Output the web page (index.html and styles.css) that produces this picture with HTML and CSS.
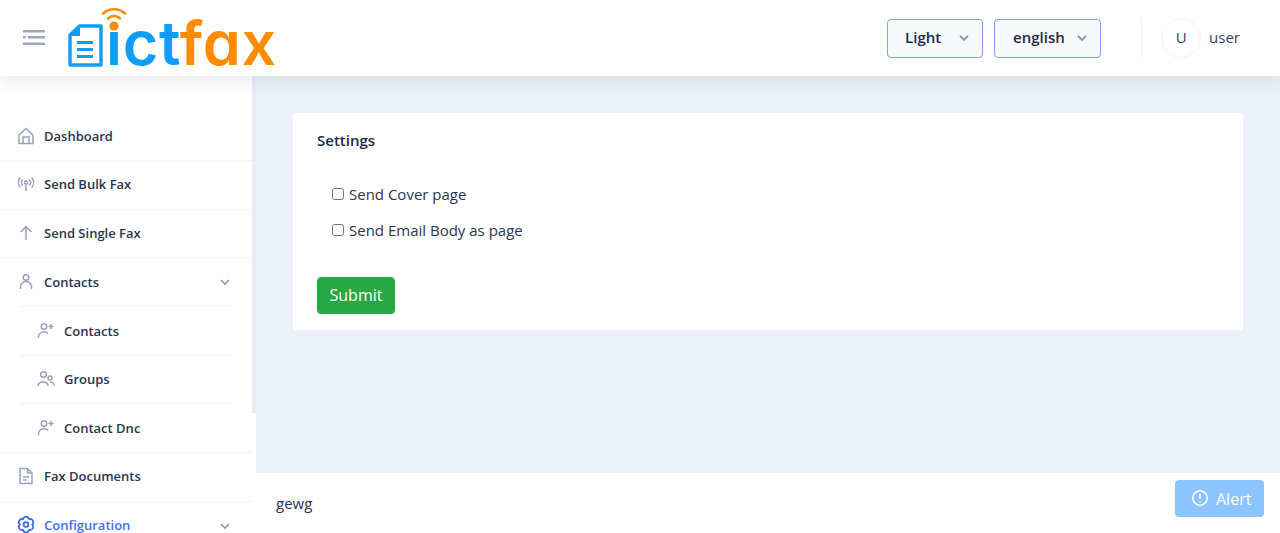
FILE: index.html
```html
<!DOCTYPE html>
<html lang="en">
<head>
<meta charset="utf-8">
<title>Settings</title>
<link rel="stylesheet" href="styles.css">
</head>
<body>
<header class="topbar">
  <button class="burger" aria-label="Menu">
    <svg width="22" height="15" viewBox="0 0 22 15" fill="#9ba5bd"><rect x="0" y="0" width="22" height="2.500"/><rect x="0" y="6" width="2.500" height="2.500"/><rect x="5" y="6" width="17" height="2.500"/><rect x="0" y="12.500" width="22" height="2.500"/></svg>
  </button>
  <div class="logo">
    <svg class="logo-doc" width="35" height="43" viewBox="0 0 35 43" fill="none">
      <path d="M11.500 2H33V41H2V11z" stroke="#0f9df8" stroke-width="3.400" stroke-linejoin="round"/>
      <path d="M12 3v9H3z" fill="#0f9df8"/>
      <path d="M9 18.500h16M9 25.500h16M9 32.500h16" stroke="#0f9df8" stroke-width="3.200"/>
    </svg>
    <span class="logo-word"><span class="blue">ıct</span><span class="orange">fax</span></span>
    <svg class="logo-wifi" width="26" height="28" viewBox="0 0 26 28" fill="none" stroke="#ff8c00" stroke-width="2.600" stroke-linecap="round">
      <path d="M2 6.500C8 .8 18 .8 24 6.500"/>
      <path d="M7 11.500c4-3.400 8-3.400 12 0"/>
      <circle cx="13" cy="19" r="4.600" fill="#ff8c00" stroke="none"/>
    </svg>
  </div>
  <div class="top-right">
    <button class="select select-theme"><span>Light</span><svg class="chev" width="12" height="8" viewBox="0 0 12 8" fill="none" stroke="#8d95a8" stroke-width="1.800"><path d="M2 2l4 4 4-4"/></svg></button>
    <button class="select select-lang"><span>english</span><svg class="chev" width="12" height="8" viewBox="0 0 12 8" fill="none" stroke="#8d95a8" stroke-width="1.800"><path d="M2 2l4 4 4-4"/></svg></button>
    <div class="user">
      <span class="avatar">U</span>
      <span class="username">user</span>
    </div>
  </div>
</header>

<div class="body-row">
  <aside class="sidebar">
    <nav class="nav">
      <a class="item"><svg class="ico" viewBox="0 0 18 18"><path d="M2 16.500V8l7-6.500L16 8v8.500zM6 16.500V10h6v6.500"/></svg>Dashboard</a>
      <a class="item"><svg class="ico" viewBox="0 0 18 18"><circle cx="9" cy="7.500" r="1.600"/><path d="M9 9v7M5.800 4.500a4.500 4.500 0 0 0 0 6.200M12.200 4.500a4.500 4.500 0 0 1 0 6.200M3.200 2.500a8 8 0 0 0 0 10M14.800 2.500a8 8 0 0 1 0 10"/></svg>Send Bulk Fax</a>
      <a class="item"><svg class="ico" viewBox="0 0 18 18"><path d="M9 16V2.500M3.500 8L9 2.500 14.500 8"/></svg>Send Single Fax</a>
      <a class="item parent"><svg class="ico" viewBox="0 0 18 18"><circle cx="9" cy="4.500" r="2.800"/><path d="M3.500 16v-2a5.500 5.500 0 0 1 11 0v2"/></svg>Contacts<svg class="chev-side" width="12" height="8" viewBox="0 0 12 8" fill="none" stroke="#8d95a8" stroke-width="1.600"><path d="M2 2l4 4 4-4"/></svg></a>
      <div class="sub">
        <a class="item subitem"><svg class="ico" viewBox="0 0 18 18"><circle cx="7" cy="4.500" r="2.800"/><path d="M1.500 16v-1a5.500 5.500 0 0 1 9.500-3.500M14 2v5M11.500 4.500h5"/></svg>Contacts</a>
        <a class="item subitem"><svg class="ico" viewBox="0 0 18 18"><circle cx="6.500" cy="4.500" r="2.800"/><circle cx="13" cy="8" r="2"/><path d="M1 16v-1a5.500 5.500 0 0 1 10 0v1M13 12a3.500 3.500 0 0 1 4 3.500"/></svg>Groups</a>
        <a class="item subitem last"><svg class="ico" viewBox="0 0 18 18"><circle cx="7" cy="4.500" r="2.800"/><path d="M1.500 16v-1a5.500 5.500 0 0 1 9.500-3.500M14 2v5M11.500 4.500h5"/></svg>Contact Dnc</a>
      </div>
      <a class="item docs"><svg class="ico" viewBox="0 0 18 18"><path d="M3 1.500h7.500L15 6v10.500H3zM10.500 1.500V6H15M6 10h6M6 13h3.500"/></svg>Fax Documents</a>
      <a class="item active"><svg class="ico" viewBox="0 0 18 18"><path d="M12.100 3.130A3.200 3.200 0 0 1 15.200 8.500 3.200 3.200 0 0 1 12.100 13.870 3.200 3.200 0 0 1 5.900 13.870 3.200 3.200 0 0 1 2.800 8.500 3.200 3.200 0 0 1 5.900 3.130 3.200 3.200 0 0 1 12.100 3.130z"/><circle cx="9" cy="8.500" r="2.400"/></svg>Configuration<svg class="chev-side" width="12" height="8" viewBox="0 0 12 8" fill="none" stroke="#8d95a8" stroke-width="1.600"><path d="M2 2l4 4 4-4"/></svg></a>
    </nav>
  </aside>

  <div class="content">
    <main class="main">
      <section class="card">
        <h2 class="card-title">Settings</h2>
        <label class="check"><input type="checkbox"><span>Send Cover page</span></label>
        <label class="check"><input type="checkbox"><span>Send Email Body as page</span></label>
        <button class="submit">Submit</button>
      </section>
    </main>
    <footer class="footer">
      <span class="foot-text">gewg</span>
      <button class="alert"><svg width="18" height="18" viewBox="0 0 18 18" fill="none" stroke="#fff" stroke-width="1.500"><circle cx="9" cy="9" r="7.200"/><path d="M9 4.800v5M9 12v1.300"/></svg>Alert</button>
    </footer>
  </div>
</div>
</body>
</html>
```

FILE: styles.css
```css
* { box-sizing: border-box; }
html, body { margin: 0; height: 100%; overflow: hidden; }
body {
  font-family: "Open Sans", "Noto Sans", sans-serif;
  color: #212b45;
  background: #ecf0f8;
  display: flex;
  flex-direction: column;
}
.topbar {
  height: 76px;
  flex: none;
  background: #fff;
  display: flex;
  align-items: center;
  position: relative;
  z-index: 2;
  box-shadow: 0 4px 18px rgba(60, 70, 100, .12);
  padding-left: 23px;
}
.burger { border: 0; background: none; padding: 0; width: 22px; height: 15px; display: block; margin-top: -1px; }
.burger svg { display: block; }
.logo { position: relative; width: 207px; height: 76px; margin-left: 23px; }
.logo-doc { position: absolute; left: 0; top: 24px; }
.logo-word {
  position: absolute;
  left: 38px;
  top: 5px;
  font-family: "Inter", sans-serif;
  font-feature-settings: "cv11" 1;
  font-weight: 600;
  font-size: 61px;
  line-height: 76px;
  letter-spacing: .8px;
  white-space: nowrap;
}
.blue { color: #0f9df8; }
.orange { color: #ff8c00; }
.logo-wifi { position: absolute; left: 33px; top: 7px; }
.top-right { margin-left: auto; display: flex; align-items: center; padding-right: 40px; }
.select {
  height: 39px;
  border: 1px solid #7da0fa;
  border-radius: 4px;
  background: #f7f9fd;
  font: 600 15px/37px "Open Sans", sans-serif;
  color: #212b45;
  display: flex;
  align-items: center;
  justify-content: space-between;
  padding: 0 12px 2px 17px;
}
.select-lang { padding-left: 18px; }
.select .chev { margin-top: 2px; }
.select-theme { width: 96px; }
.select-lang { width: 107px; margin-left: 11px; }
.user { display: flex; align-items: center; margin-left: 40px; padding-left: 19px; border-left: 1px solid #f1f3f7; height: 40px; }
.avatar {
  width: 40px; height: 40px;
  border: 1px solid #f0f2f6;
  border-radius: 50%;
  display: flex; align-items: center; justify-content: center;
  font-size: 15px;
  color: #3a4257;
  padding-bottom: 2px;
}
.username { font-size: 15px; margin-left: 8px; color: #3a4257; padding-bottom: 2px; }
.body-row { flex: 1; display: flex; min-height: 0; }
.sidebar {
  width: 256px;
  flex: none;
  overflow: hidden;
  background: linear-gradient(#e7ebf5 337px, #fff 337px);
}
.nav { width: 252px; background: #fff; padding-top: 36.200px; min-height: 100%; }
.item {
  height: 48.700px;
  display: flex;
  align-items: center;
  padding-left: 17px;
  padding-bottom: 1px;
  font-size: 13px;
  font-weight: 600;
  color: #2b3550;
  border-bottom: 1px solid #f3f4f8;
  position: relative;
}
.item.parent { border-bottom: 0; }
.parent::after { content: ""; position: absolute; left: 20px; right: 20px; bottom: 0; height: 1px; background: #f3f4f8; }
.ico {
  width: 18px; height: 18px;
  margin-right: 9px;
  flex: none;
  fill: none;
  stroke: #98a2ba;
  stroke-width: 1.500;
}
.chev-side { position: absolute; left: 219px; top: 20px; }
.subitem { padding-left: 37px; border-bottom: 0; }
.subitem::after { content: ""; position: absolute; left: 20px; right: 20px; bottom: 0; height: 1px; background: #f3f4f8; }
.subitem.last::after { left: 0; right: 0; }
.active { color: #3f6ff0; }
.active .ico { stroke: #3566f0; stroke-width: 1.700; }
.content { flex: 1; display: flex; flex-direction: column; min-width: 0; }
.main { flex: 1; padding: 37px 37px 0; min-height: 0; }
.card {
  background: #fff;
  border-radius: 3px;
  height: 217px;
  padding: 16px 24px;
}
.card-title { margin: 0 0 26px; font-size: 15px; font-weight: 600; line-height: 22px; color: #212b45; }
.check { display: flex; align-items: center; height: 36px; padding-left: 15px; font-size: 15px; color: #2b3550; line-height: 20px; }
.check input { margin: 0 4px 2px 0; width: 12px; height: 12px; }
.check span { margin-left: 1px; position: relative; top: -1px; }
.submit {
  margin-top: 28px;
  display: block;
  width: 78px;
  height: 37px;
  background: #28a745;
  border: 1px solid #28a745;
  border-radius: 4px;
  color: #fff;
  font: 400 16px "Open Sans", sans-serif;
  padding-bottom: 3px;
}
.footer {
  height: 60px;
  flex: none;
  background: #fff;
  display: flex;
  align-items: center;
  justify-content: space-between;
  padding: 0 16px 0 20px;
}
.foot-text { font-size: 15px; color: #2b3550; }
.alert {
  width: 89px;
  height: 37px;
  margin-top: -9px;
  background: #8cc4ff;
  border: 0;
  border-radius: 4px;
  color: #fff;
  font: 400 16px "Open Sans", sans-serif;
  display: flex;
  align-items: center;
  padding-left: 16px;
  gap: 7px;
}
.alert svg { margin-top: -2px; }
```
